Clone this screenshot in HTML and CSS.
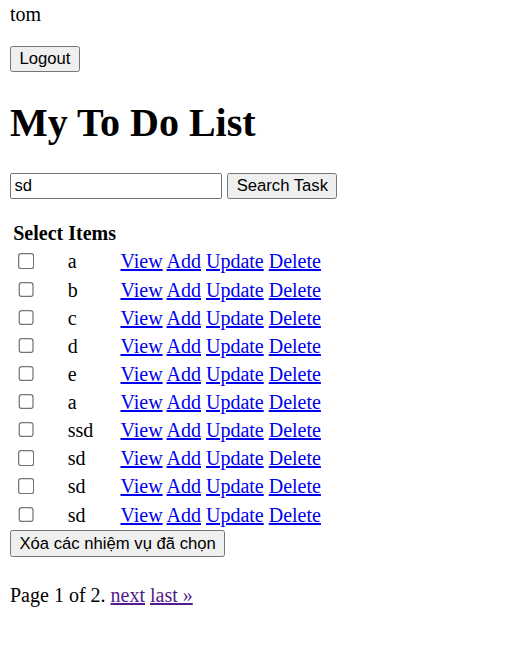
FILE: index.html
```html
<!DOCTYPE html>
<html>
<head>
<meta charset="utf-8">
<title>My To Do List</title>
<link rel="stylesheet" href="styles.css">
</head>
<body>
<div class="user">tom</div>
<form class="logout-form"><p class="logout-p"><button type="button" class="btn">Logout</button></p></form>
<h1 class="title">My To Do List</h1>
<form class="search-form"><input type="text" class="search-input" value="sd"> <button type="button" class="btn">Search Task</button></form>
<form class="list-form">
<table class="items">
<tr><th colspan="2" class="head">Select Items</th></tr>
<tr><td class="c1"><input type="checkbox" class="chk"></td><td class="c2">a</td><td><a href="#">View</a> <a href="#">Add</a> <a href="#">Update</a> <a href="#">Delete</a></td></tr>
<tr><td class="c1"><input type="checkbox" class="chk"></td><td class="c2">b</td><td><a href="#">View</a> <a href="#">Add</a> <a href="#">Update</a> <a href="#">Delete</a></td></tr>
<tr><td class="c1"><input type="checkbox" class="chk"></td><td class="c2">c</td><td><a href="#">View</a> <a href="#">Add</a> <a href="#">Update</a> <a href="#">Delete</a></td></tr>
<tr><td class="c1"><input type="checkbox" class="chk"></td><td class="c2">d</td><td><a href="#">View</a> <a href="#">Add</a> <a href="#">Update</a> <a href="#">Delete</a></td></tr>
<tr><td class="c1"><input type="checkbox" class="chk"></td><td class="c2">e</td><td><a href="#">View</a> <a href="#">Add</a> <a href="#">Update</a> <a href="#">Delete</a></td></tr>
<tr><td class="c1"><input type="checkbox" class="chk"></td><td class="c2">a</td><td><a href="#">View</a> <a href="#">Add</a> <a href="#">Update</a> <a href="#">Delete</a></td></tr>
<tr><td class="c1"><input type="checkbox" class="chk"></td><td class="c2">ssd</td><td><a href="#">View</a> <a href="#">Add</a> <a href="#">Update</a> <a href="#">Delete</a></td></tr>
<tr><td class="c1"><input type="checkbox" class="chk"></td><td class="c2">sd</td><td><a href="#">View</a> <a href="#">Add</a> <a href="#">Update</a> <a href="#">Delete</a></td></tr>
<tr><td class="c1"><input type="checkbox" class="chk"></td><td class="c2">sd</td><td><a href="#">View</a> <a href="#">Add</a> <a href="#">Update</a> <a href="#">Delete</a></td></tr>
<tr><td class="c1"><input type="checkbox" class="chk"></td><td class="c2">sd</td><td><a href="#">View</a> <a href="#">Add</a> <a href="#">Update</a> <a href="#">Delete</a></td></tr>
</table>
<button type="button" class="btn">Xóa các nhiệm vụ đã chọn</button>
</form>
<p class="pager">Page 1 of 2. <a href="#" class="visited">next</a> <a href="#" class="visited">last »</a></p>
</body>
</html>
```

FILE: styles.css
```css
html {
  zoom: 1.25;
}
body {
  margin: 2px 8px 8px 8px;
  font-family: "Liberation Serif", "Times New Roman", serif;
  font-size: 16px;
  color: #000;
  background: #fff;
}
.user {
  line-height: normal;
}
.logout-form {
  margin: 0;
}
.logout-p {
  margin: 16px 0;
}
.title {
  font-size: 32px;
  font-weight: bold;
  margin: 21.44px 0;
}
.search-form {
  margin: 0 0 16px 0;
}
.btn {
  font-family: "Liberation Sans", Arial, sans-serif;
  font-size: 13.333px;
}
.search-input {
  font-family: "Liberation Sans", Arial, sans-serif;
  font-size: 13.333px;
  width: 162.5px;
}
.list-form {
  margin: 0;
}
.items {
  border-spacing: 2px;
}
.items td, .items th {
  padding: 1px;
  height: 18.9px;
  line-height: 18.9px;
}
.head {
  text-align: left;
  white-space: nowrap;
}
.c1 {
  width: 39px;
}
.c2 {
  width: 37.7px;
}
.chk {
  margin: 0 3px 0 4px;
  vertical-align: -1px;
}
a {
  color: #0000ee;
}
a.visited {
  color: #551a8b;
}
.pager {
  margin: 21.5px 0 16px 0;
}
```
